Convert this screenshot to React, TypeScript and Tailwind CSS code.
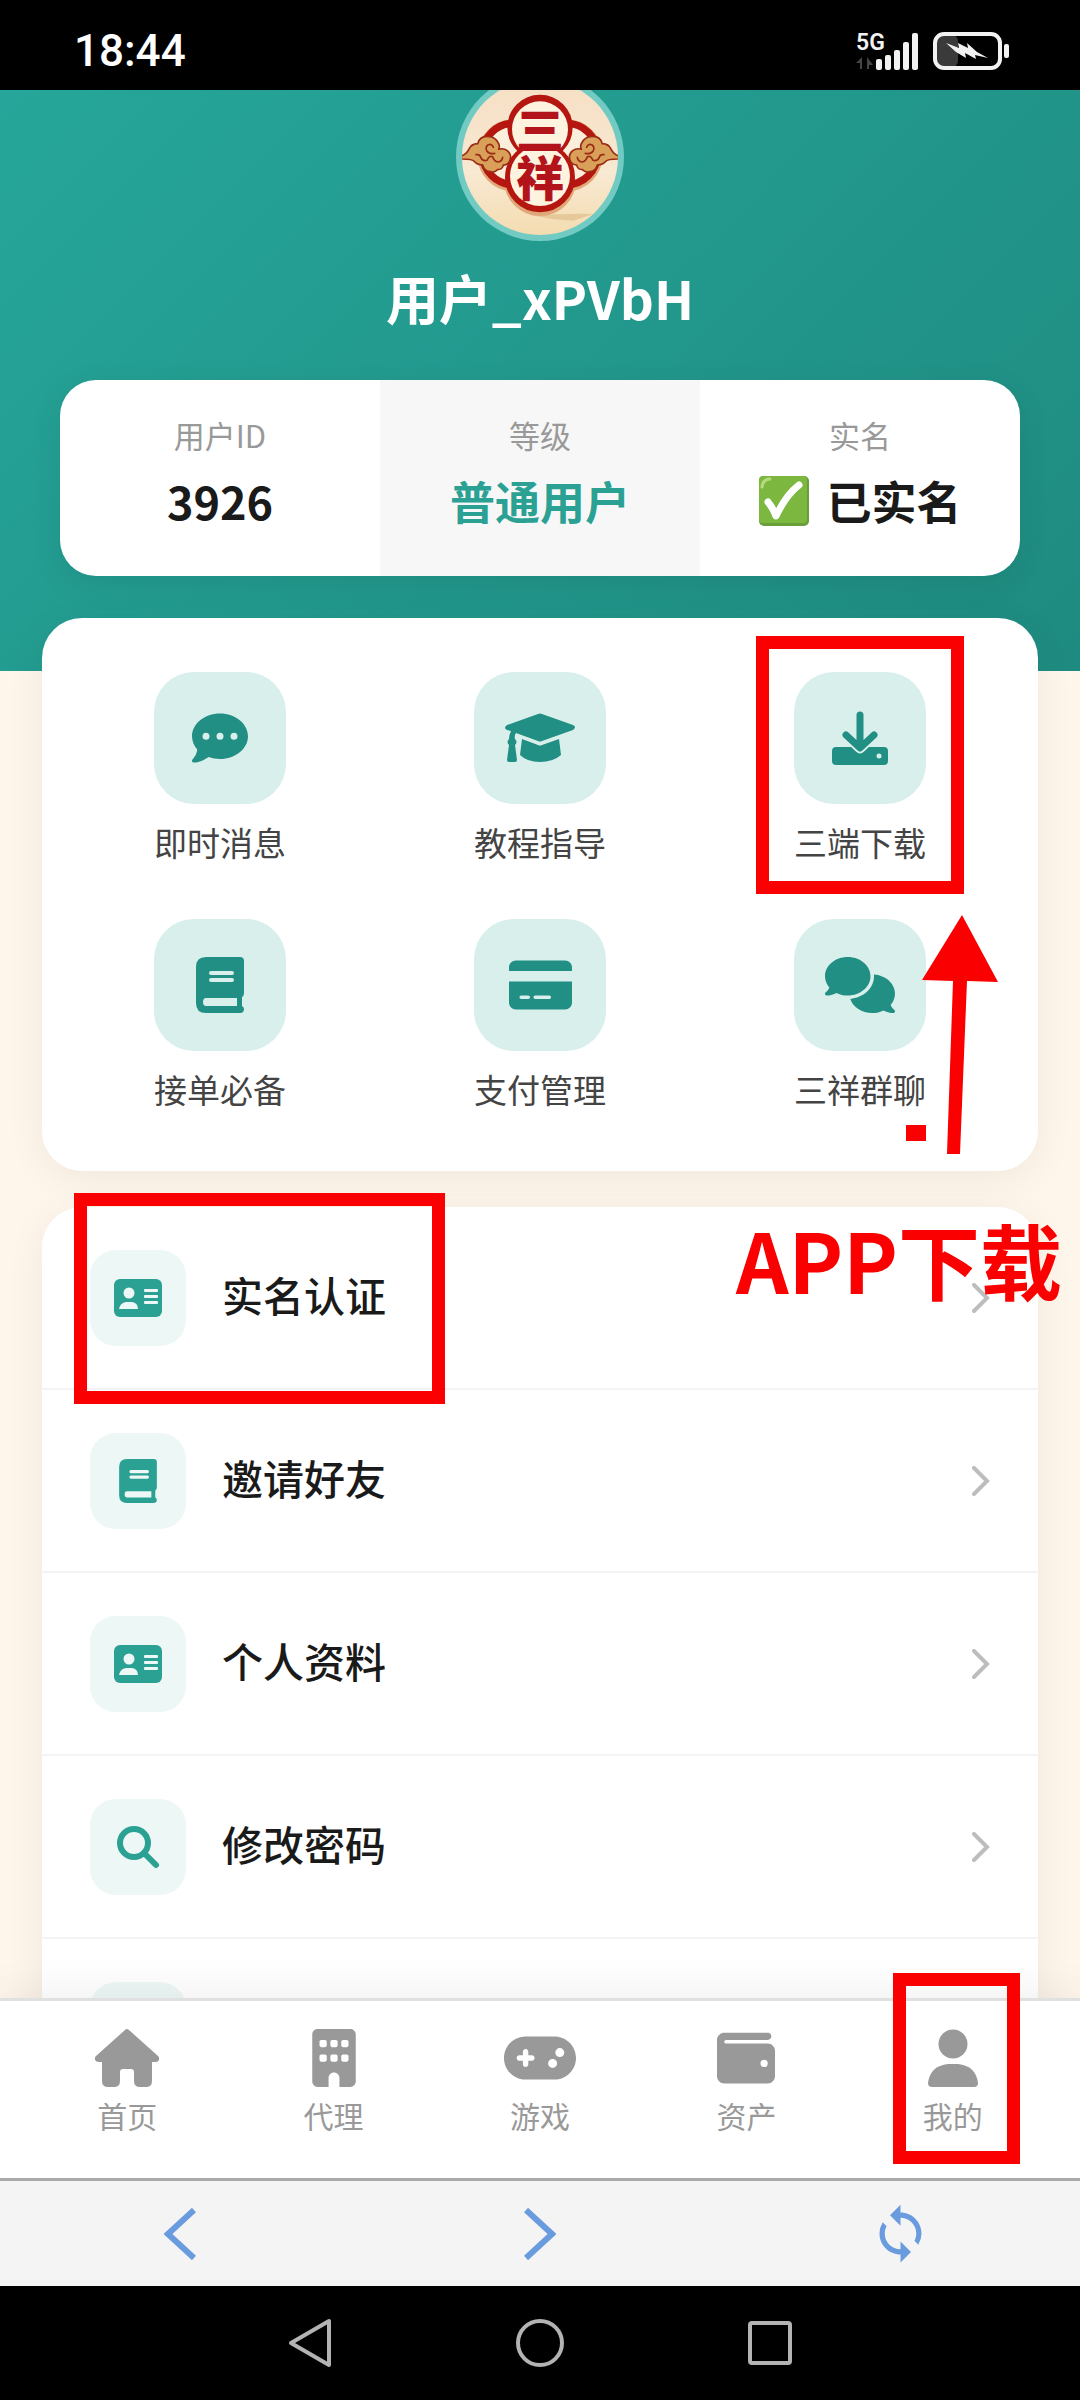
import type { ReactNode } from 'react'
import { FaBuilding, FaCommentDots, FaComments, FaCreditCard, FaGamepad, FaWallet } from 'react-icons/fa6'
import { MdSync } from 'react-icons/md'

const shortcuts: { label: string; icon: ReactNode; marked?: boolean }[] = [
  { label: '即时消息', icon: <FaCommentDots size={56} /> },
  { label: '教程指导', icon: <CapIcon /> },
  { label: '三端下载', icon: <DownloadIcon />, marked: true },
  { label: '接单必备', icon: <BookIcon className="h-14 w-12" /> },
  { label: '支付管理', icon: <FaCreditCard size={56} className="w-[63px]" /> },
  { label: '三祥群聊', icon: <FaComments size={56} className="w-[70px]" /> },
]

const menu: { label?: string; icon: ReactNode; marked?: boolean }[] = [
  { label: '实名认证', icon: <IdCardIcon />, marked: true },
  { label: '邀请好友', icon: <BookIcon className="h-11 w-[38px]" /> },
  { label: '个人资料', icon: <IdCardIcon /> },
  { label: '修改密码', icon: <SearchIcon /> },
  { icon: <IdCardIcon /> },
]

const tabs: { label: string; icon: ReactNode; marked?: boolean }[] = [
  { label: '首页', icon: <HouseIcon /> },
  { label: '代理', icon: <FaBuilding size={58} /> },
  { label: '游戏', icon: <FaGamepad size={58} className="w-[72px]" /> },
  { label: '资产', icon: <FaWallet size={58} /> },
  { label: '我的', icon: <UserIcon />, marked: true },
]

function CapIcon() {
  return (
    <svg width="70" height="50" viewBox="0 0 70 50" fill="currentColor">
      <path d="M33 1q2-1 4 0l31 11q4 2 0 5L37 28q-2 1-4 0L11 20q-2 3-1 6 3 3 0 6l2 15q0 2-2 2H4q-2 0-2-2l2-15q-3-3 0-6 0-4 2-8l-4-1q-4-2 0-5z" />
      <path d="M17 26l16 6q2 1 4 0l17-6 2 16q-8 7-21 7t-20-7z" />
    </svg>
  )
}

function DownloadIcon() {
  return (
    <svg width="56" height="56" viewBox="0 0 56 56" fill="none">
      <path d="M4 37h16l5 5q3 3 6 0l5-5h16q4 0 4 4v10q0 4-4 4H4q-4 0-4-4V41q0-4 4-4z" fill="currentColor" />
      <path
        d="M28 5v32M14 24l14 13 14-13"
        stroke="#d9efec"
        strokeWidth="12"
        strokeLinecap="round"
        strokeLinejoin="round"
      />
      <path
        d="M28 5v32M14 25l14 13 14-13"
        stroke="currentColor"
        strokeWidth="7"
        strokeLinecap="round"
        strokeLinejoin="round"
      />
      <circle cx="47" cy="46" r="2.5" fill="#d9efec" />
    </svg>
  )
}

function BookIcon({ className }: { className: string }) {
  return (
    <svg className={className} viewBox="0 0 48 56" fill="currentColor" fillRule="evenodd">
      <path d="M10 0h34q4 0 4 4v32q0 3-2 4v9q2 1 2 3 0 4-4 4H10Q0 56 0 46V10Q0 0 10 0zM15 14q-2 0-2 2t2 2h21q2 0 2-2t-2-2zM15 21q-2 0-2 2t2 2h21q2 0 2-2t-2-2zM10 41q-3 0-3 4t3 4h31v-8z" />
    </svg>
  )
}

function IdCardIcon() {
  return (
    <svg width="48" height="38" viewBox="0 0 48 38" fill="currentColor">
      <rect width="48" height="38" rx="6" />
      <g fill="#edf7f5">
        <circle cx="15" cy="14" r="5.5" />
        <path d="M12 23h6q6 1 6 7H5q1-6 7-7z" />
        <rect x="30" y="10" width="14" height="3" rx="1" />
        <rect x="30" y="16" width="14" height="3" rx="1" />
        <rect x="30" y="22" width="14" height="3" rx="1" />
      </g>
    </svg>
  )
}

function SearchIcon() {
  return (
    <svg width="44" height="44" viewBox="0 0 44 44" fill="none" stroke="currentColor" strokeWidth="6">
      <circle cx="18" cy="18" r="14" />
      <path d="M28 28l12 12" strokeLinecap="round" />
    </svg>
  )
}

function HouseIcon() {
  return (
    <svg width="64" height="58" viewBox="0 0 64 58" fill="currentColor">
      <path d="M30 1q2-2 4 0l29 26q2 2 1 4t-3 2h-4v19q0 6-6 6H45q-6 0-6-6V43q0-3-3-3h-8q-3 0-3 3v9q0 6-6 6h-6q-6 0-6-6V33H4q-3 0-4-2t1-4z" />
    </svg>
  )
}

function UserIcon() {
  return (
    <svg width="50" height="58" viewBox="0 0 50 58" fill="currentColor">
      <circle cx="25" cy="15" r="14.5" />
      <path d="M20 35h10q18 2 20 19 0 4-4 4H4q-4 0-4-4 2-17 20-19z" />
    </svg>
  )
}

function StatusIcons() {
  return (
    <svg width="153" height="54" viewBox="0 -8 153 54" aria-label="5G">
      <text x="0" y="18" fontSize="23" fontWeight="600" fill="#f2f2f2" fontFamily="Roboto, sans-serif">5G</text>
      <path d="M6 25v12H4v-6H0zM11 25v12h2v-4h4z" fill="#444" />
      <g fill="#f2f2f2">
        <rect x="20" y="27" width="6" height="11" rx="2" />
        <rect x="29" y="23" width="6" height="15" rx="2" />
        <rect x="38" y="18" width="6" height="20" rx="2" />
        <rect x="47" y="10" width="6" height="28" rx="2" />
        <rect x="56" y="1" width="6" height="37" rx="2" />
        <rect x="148" y="12" width="5" height="14" rx="2" />
      </g>
      <rect x="80" y="3" width="22" height="32" rx="6" fill="#3a3a3a" />
      <rect x="79" y="2" width="65" height="34" rx="9" fill="none" stroke="#f2f2f2" strokeWidth="4" />
      <path d="M90 11l13 5-1-5 10 5-1-5 10 9 11 6-13-3 1 4-11-6 1 5-10-6z" fill="#f2f2f2" />
    </svg>
  )
}

function Cloud() {
  return (
    <g stroke="#9c2a14" strokeWidth="5" strokeLinejoin="round" strokeLinecap="round">
      <path
        d="M124 287q14-2 22-18 8-18 27-18 6-23 30-22 24 1 33 22 4 10 0 17 14-5 26 4 16 14 6 33-6 10-18 10-2 14-18 14-8 10-22 6-18-2-22-20-18-2-24-10-6-8-40-8z"
        fill="#d9a05a"
      />
      <path d="M220 262q-4-12-15-8-10 6-5 18 8 12 24 8M168 284q12-2 14 8 6 14 20 8 4-14 16-10 4 14 16 16 12-2 14-14" fill="none" />
    </g>
  )
}

function Avatar() {
  return (
    <svg className="size-[168px]" viewBox="108 39 504 504" role="img" aria-label="三祥">
      <defs>
        <linearGradient id="plate" x1="0" y1="0" x2="0" y2="1">
          <stop offset="0" stopColor="#f6dfc4" />
          <stop offset="0.6" stopColor="#f8e9d3" />
          <stop offset="1" stopColor="#f4dcb0" />
        </linearGradient>
        <clipPath id="disc">
          <circle cx="360" cy="291" r="234" />
        </clipPath>
      </defs>
      <circle cx="360" cy="291" r="252" fill="#72cbc3" />
      <circle cx="360" cy="291" r="234" fill="url(#plate)" />
      <g clipPath="url(#disc)">
        <path d="M340 466q90-6 180-4l-60 20q-70-2-120-16z" fill="#dfbf8c" opacity="0.7" />
        <g fill="none" stroke="#e0a878" strokeWidth="32">
          <circle cx="280" cy="286" r="92" />
          <circle cx="440" cy="286" r="92" />
          <circle cx="360" cy="360" r="92" />
        </g>
        <g fill="#fbeedb" stroke="#b5160f" strokeWidth="22">
          <circle cx="280" cy="282" r="92" />
          <circle cx="440" cy="282" r="92" />
          <circle cx="360" cy="202" r="87" />
          <circle cx="360" cy="352" r="94" />
        </g>
        <g fill="#fdf3df">
          <circle cx="360" cy="208" r="84" />
          <circle cx="360" cy="348" r="90" />
        </g>
        <Cloud />
        <g transform="translate(720 0) scale(-1 1)">
          <Cloud />
        </g>
      </g>
      <text
        x="360"
        y="138"
        className="[writing-mode:vertical-rl]"
        fill="#b3141b"
        fontFamily="'Noto Sans CJK SC', sans-serif"
        fontSize="144"
        fontWeight="900"
      >
        三祥
      </text>
    </svg>
  )
}

function CheckBadge() {
  return (
    <svg width="52" height="52" viewBox="0 0 52 52" aria-label="已认证">
      <rect x="1" y="1" width="50" height="50" rx="5" fill="#689f38" />
      <rect x="1" y="1" width="48" height="47" rx="4" fill="#7cb740" />
      <path d="M4 12q1-8 8-8" stroke="#b4dc7c" strokeWidth="3" strokeLinecap="round" fill="none" />
      <path d="M10 27q5 6 8 14Q28 20 41 10" stroke="#fff" strokeWidth="7" strokeLinecap="round" strokeLinejoin="round" fill="none" />
    </svg>
  )
}

function Stat({ label, children, className = '' }: { label: string; children: ReactNode; className?: string }) {
  return (
    <div className={`flex flex-col items-center gap-1.5 pt-[30px] pb-10 ${className}`}>
      <dt className="text-[31px] leading-[50px] text-[#999]">{label}</dt>
      <dd className="flex h-[70px] items-center gap-4 text-[45px] leading-[70px] font-bold">{children}</dd>
    </div>
  )
}

function Profile() {
  return (
    <header className="bg-linear-135 from-[#26a69a] to-[#1f8b80] px-[60px] pb-[95px]">
      <div className="-mt-[17px] flex flex-col items-center">
        <Avatar />
        <h1 className="mt-4 text-[53px] leading-[80px] font-bold text-white">用户_xPVbH</h1>
      </div>
      <dl className="mt-[43px] grid grid-cols-3 overflow-hidden rounded-[36px] bg-white text-[#1a1a1a] shadow-[0_8px_32px_rgba(0,0,0,0.08)]">
        <Stat label="用户ID">3926</Stat>
        <Stat label="等级" className="bg-[#f7f7f8] text-[#2ba194]">普通用户</Stat>
        <Stat label="实名"><CheckBadge />已实名</Stat>
      </dl>
    </header>
  )
}

function Shortcuts() {
  return (
    <section className="relative mx-[42px] -mt-[53px] rounded-[40px] bg-white px-[18px] pt-[54px] pb-[58px] shadow-[0_8px_40px_rgba(0,0,0,0.06)]">
      <div className="grid grid-cols-3 gap-y-[53px]">
        {shortcuts.map(s => (
          <button key={s.label} type="button" className="relative flex flex-col items-center gap-3.5">
            <span className="flex size-[132px] items-center justify-center rounded-[40px] bg-[#d9efec] text-[#218f83]">
              {s.icon}
            </span>
            <span className="text-[33px] leading-[48px] text-[#444]">{s.label}</span>
            {s.marked && <span className="absolute inset-x-14 -top-9 -bottom-7 border-[13px] border-[#fb0000]" />}
          </button>
        ))}
      </div>
      <svg className="absolute right-10 bottom-4 z-10" width="92" height="240" viewBox="0 0 92 240" fill="#fb0000">
        <path d="M56 0l36 67-31-1-7 173H41l6-173-31-1z" />
        <rect x="0" y="210" width="20" height="16" />
      </svg>
    </section>
  )
}

function Menu() {
  return (
    <section className="relative mx-[42px] mt-9 rounded-[40px] bg-white shadow-[0_8px_40px_rgba(0,0,0,0.06)]">
      <ul>
        {menu.map(({ label, icon, marked }, i) => (
          <li key={i} className="relative border-b-2 border-[#f4f4f4]">
            <a href="#" className="flex h-[181px] items-center px-12">
              <span className="flex size-24 items-center justify-center rounded-[26px] bg-[#edf7f5] text-[#2ba194]">
                {icon}
              </span>
              {label && <span className="ml-9 pb-1.5 text-[41px] font-medium text-[#1a1a1a]">{label}</span>}
              <svg className="ml-auto" width="18" height="30" viewBox="0 0 18 30" fill="none">
                <path d="M2 2l13 13L2 28" stroke="#bdbdbd" strokeWidth="4" strokeLinecap="round" />
              </svg>
            </a>
            {marked && <span className="absolute -top-3.5 -bottom-4 left-8 w-[371px] border-[13px] border-[#fb0000]" />}
          </li>
        ))}
      </ul>
      <strong className="absolute top-0 -right-6 text-[82px] leading-[104px] font-bold whitespace-nowrap text-[#fb0000]">
        APP下载
      </strong>
    </section>
  )
}

function TabBar() {
  return (
    <nav className="relative flex h-[180px] shrink-0 border-t-[3px] border-[#e0e0e0] bg-white px-6 shadow-[0_-8px_40px_rgba(0,0,0,0.06)]">
      {tabs.map(t => (
        <a key={t.label} href="#" className="relative flex flex-1 flex-col items-center gap-1.5 pt-7 text-[#999]">
          <span className="flex h-[58px] items-center">{t.icon}</span>
          <span className="text-[30px] leading-[44px]">{t.label}</span>
          {t.marked && <span className="absolute -top-7 left-[43px] h-[191px] w-[127px] border-[13px] border-[#fb0000]" />}
        </a>
      ))}
    </nav>
  )
}

function BrowserBar() {
  return (
    <div className="relative grid h-[108px] shrink-0 grid-cols-3 items-center border-t-[3px] border-[#a9a9a9] bg-[#f4f4f5] text-[#6a9bdf]">
      <button type="button" aria-label="后退" className="flex justify-center">
        <svg width="32" height="52" viewBox="0 0 32 52" fill="none">
          <path d="M30 2L4 26l26 24" stroke="currentColor" strokeWidth="6" />
        </svg>
      </button>
      <button type="button" aria-label="前进" className="flex justify-center">
        <svg width="32" height="52" viewBox="0 0 32 52" fill="none">
          <path d="M2 2l26 24L2 50" stroke="currentColor" strokeWidth="6" />
        </svg>
      </button>
      <button type="button" aria-label="刷新" className="flex justify-center">
        <MdSync size={63} />
      </button>
    </div>
  )
}

function SystemNav() {
  return (
    <div className="flex h-[114px] shrink-0 items-center justify-center gap-[184px] bg-black">
      <button type="button" aria-label="返回">
        <svg width="44" height="50" viewBox="0 0 44 50" fill="none" stroke="#b3b3b3" strokeWidth="4" strokeLinejoin="round">
          <path d="M41 3v44L3 25z" />
        </svg>
      </button>
      <button type="button" aria-label="主页" className="size-12 rounded-full border-4 border-[#b3b3b3]" />
      <button type="button" aria-label="最近任务" className="size-11 rounded-sm border-4 border-[#b3b3b3]" />
    </div>
  )
}

export default function App() {
  return (
    <div
      lang="zh-CN"
      className="flex h-screen flex-col overflow-hidden bg-[#fef5eb] font-['Noto_Sans_CJK_SC',sans-serif]"
    >
      <div className="flex h-[90px] shrink-0 items-center justify-between bg-black pt-3 pr-[71px] pl-[74px] text-white">
        <time className="font-[Roboto,sans-serif] text-[44px] font-medium">18:44</time>
        <StatusIcons />
      </div>
      <main className="min-h-0 flex-1 overflow-hidden">
        <Profile />
        <Shortcuts />
        <Menu />
      </main>
      <TabBar />
      <BrowserBar />
      <SystemNav />
    </div>
  )
}
